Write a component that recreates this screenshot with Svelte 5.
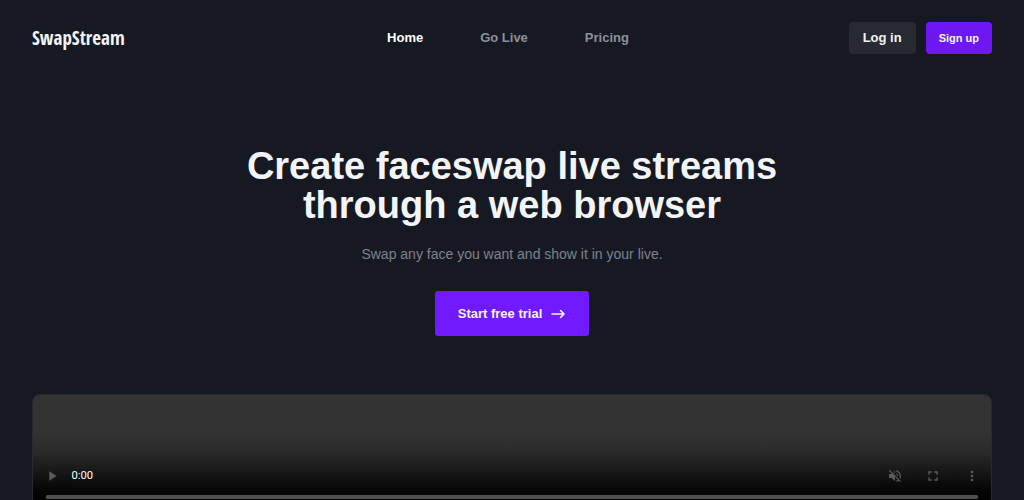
<script lang="ts">
  const links = [
    { label: 'Home', href: '#home' },
    { label: 'Go Live', href: '#live' },
    { label: 'Pricing', href: '#pricing' }
  ];
  let current = $state('Home');
</script>

<header>
  <a class="logo" href="#home">SwapStream</a>
  <nav>
    {#each links as { label, href }}
      <a {href} class:active={current === label} onclick={() => (current = label)}>{label}</a>
    {/each}
  </nav>
  <div class="account">
    <button class="login">Log in</button>
    <button class="signup">Sign up</button>
  </div>
</header>

<main>
  <h1>Create faceswap live streams through a web browser</h1>
  <p>Swap any face you want and show it in your live.</p>
  <a class="trial" href="#trial">
    Start free trial
    <svg width="16" height="16" viewBox="0 0 16 16" fill="none" stroke="currentColor" stroke-width="1.6" stroke-linecap="round" stroke-linejoin="round" aria-hidden="true">
      <path d="M2 8h12M10.500 4.500l3.500 3.500-3.500 3.500" />
    </svg>
  </a>
  <video controls muted></video>
</main>

<style>
  :global(body){margin:0;background:#161922;font-family:"Liberation Sans",Arial,sans-serif}
  header{display:grid;grid-template-columns:1fr auto 1fr;align-items:center;padding:22px 32px;line-height:24px}
  a{color:inherit;text-decoration:none}
  .logo{justify-self:start;font:19px/32px "Open Sans Condensed","Roboto Condensed","Liberation Sans",sans-serif;color:#f3f4f6}
  nav{display:flex;gap:57px;padding-right:8px;font-size:13px;font-weight:700;color:#8d9099}
  nav .active{color:#fff}
  .account{display:flex;justify-content:flex-end;gap:10px}
  button{height:32px;padding:0 13px;border:0;border-radius:4px;font:700 11px/20px "Liberation Sans",Arial,sans-serif;color:#f3f4f6;cursor:pointer}
  .login{padding:0 14px;background:#272a33;font-size:13px}
  .signup{background:#6e19f5}
  main{display:flex;flex-direction:column;align-items:center;padding:71px 32px 32px;text-align:center}
  h1{max-width:600px;margin:0;font-size:38px;line-height:39px;color:#f3f4f6}
  p{margin:17px 0 25px;font-size:14px;line-height:24px;color:#7f828e}
  .trial{display:flex;align-items:center;gap:8px;padding:10px 23px;border-radius:3px;background:#711aff;font-size:13px;font-weight:700;line-height:25px;color:#f3f4f6}
  video{display:block;box-sizing:border-box;width:100%;height:152px;margin-top:72px;border:1px solid #272a33;border-radius:10px;zoom:.8}
</style>
